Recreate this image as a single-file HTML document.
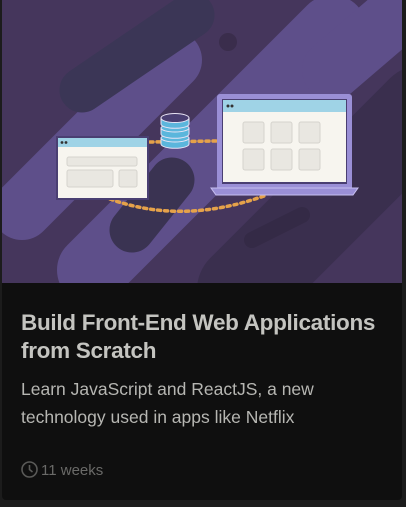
<!DOCTYPE html>
<html><head><style>
html,body{margin:0;padding:0;background:#1c1c1c;width:406px;height:507px;overflow:hidden}
.card{position:absolute;left:2px;top:0;width:400px;height:500px;background:#0f0f0f;border-radius:0 0 4px 4px;overflow:hidden}
.img{position:absolute;left:0;top:0;width:400px;height:283px}
h1{position:absolute;left:19px;top:309px;margin:0;width:380px;font:bold 22.5px/28px "Liberation Sans",sans-serif;color:#c4c4c0;letter-spacing:-0.3px}
p{position:absolute;left:19px;top:375px;margin:0;width:375px;font:17.5px/28px "Liberation Sans",sans-serif;color:#b6b6b2}
.wk{position:absolute;left:19px;top:461px;font:15px/20px "Liberation Sans",sans-serif;color:#6a6a68}
</style></head><body>
<div class="card">
<svg class="img" viewBox="0 0 400 283">
<rect width="400" height="283" fill="#45365c"/>
<g stroke-linecap="round" fill="none">
<line x1="90" y1="270" x2="330" y2="30" stroke="#5e4f8a" stroke-width="70"/>
<line x1="20" y1="210" x2="170" y2="60" stroke="#5e4f8a" stroke-width="60"/>
<line x1="80" y1="90" x2="190" y2="15" stroke="#3b3656" stroke-width="45"/>
<line x1="240" y1="290" x2="420" y2="110" stroke="#3a2f4e" stroke-width="90"/>
<line x1="250" y1="240" x2="300" y2="215" stroke="#342a46" stroke-width="16"/>
<line x1="130" y1="230" x2="170" y2="180" stroke="#3a3352" stroke-width="45"/>
<line x1="400" y1="10" x2="330" y2="70" stroke="#5e4f8a" stroke-width="60"/>
</g>
<circle cx="226" cy="42" r="9" fill="#3a2d4c"/>
<path d="M108 199 Q180 225 262 196" stroke="#e5a24a" stroke-width="3.5" stroke-dasharray="3 4" fill="none" stroke-linecap="round"/>
<line x1="148" y1="142" x2="214" y2="141" stroke="#e5a24a" stroke-width="3.5" stroke-dasharray="3 4" stroke-linecap="round"/>
<rect x="54" y="136" width="93" height="64" fill="#4a3f72"/>
<rect x="56" y="138" width="89" height="60" fill="#f7f5ef"/>
<rect x="56" y="138" width="89" height="9" fill="#9fd3e6"/>
<circle cx="60" cy="142.5" r="1.4" fill="#333"/><circle cx="64" cy="142.5" r="1.4" fill="#333"/>
<rect x="65" y="157" width="70" height="9" rx="2" fill="#e9e7e1" stroke="#d5d3cd"/>
<rect x="65" y="170" width="46" height="17" rx="2" fill="#e9e7e1" stroke="#d5d3cd"/>
<rect x="117" y="170" width="18" height="17" rx="2" fill="#e9e7e1" stroke="#d5d3cd"/>
<g stroke="#e8e4f5" stroke-width="1">
<path d="M159 138 v6 a13 4 0 0 0 28 0 v-6z" fill="#5bb6dc"/>
<ellipse cx="173" cy="138" rx="14" ry="4" fill="#5bb6dc"/>
<path d="M159 128 v6 a13 4 0 0 0 28 0 v-6z" fill="#5bb6dc"/>
<ellipse cx="173" cy="128" rx="14" ry="4" fill="#5bb6dc"/>
<path d="M159 118 v6 a13 4 0 0 0 28 0 v-6z" fill="#5bb6dc"/>
<ellipse cx="173" cy="118" rx="14" ry="4.5" fill="#4a3f72"/>
</g>
<rect x="215" y="94" width="135" height="96" rx="3" fill="#9a8fd6"/>
<rect x="220" y="99" width="125" height="85" fill="#4a3f72"/>
<rect x="221" y="100" width="123" height="82" fill="#f7f5ef"/>
<rect x="221" y="100" width="123" height="12" fill="#9fd3e6"/>
<circle cx="226" cy="106" r="1.5" fill="#333"/><circle cx="230" cy="106" r="1.5" fill="#333"/>
<g fill="#e9e7e1" stroke="#d5d3cd">
<rect x="241" y="122" width="21" height="21" rx="2"/><rect x="269" y="122" width="21" height="21" rx="2"/><rect x="297" y="122" width="21" height="21" rx="2"/>
<rect x="241" y="149" width="21" height="21" rx="2"/><rect x="269" y="149" width="21" height="21" rx="2"/><rect x="297" y="149" width="21" height="21" rx="2"/>
</g>
<path d="M209 188 H356 L351 195 H214Z" fill="#9a8fd6" stroke="#c7bff0" stroke-width="1"/>
</svg>
<h1>Build Front-End Web Applications from Scratch</h1>
<p>Learn JavaScript and ReactJS, a new technology used in apps like Netflix</p>
<div class="wk"><svg width="17" height="17" viewBox="0 0 17 17" style="vertical-align:-3px;margin-right:3px"><circle cx="8.5" cy="8.5" r="7.5" fill="none" stroke="#5a5a58" stroke-width="1.6"/><path d="M8.5 4v4.5l3 2.5" fill="none" stroke="#5a5a58" stroke-width="1.6"/></svg>11 weeks</div>
</div>
</body></html>
